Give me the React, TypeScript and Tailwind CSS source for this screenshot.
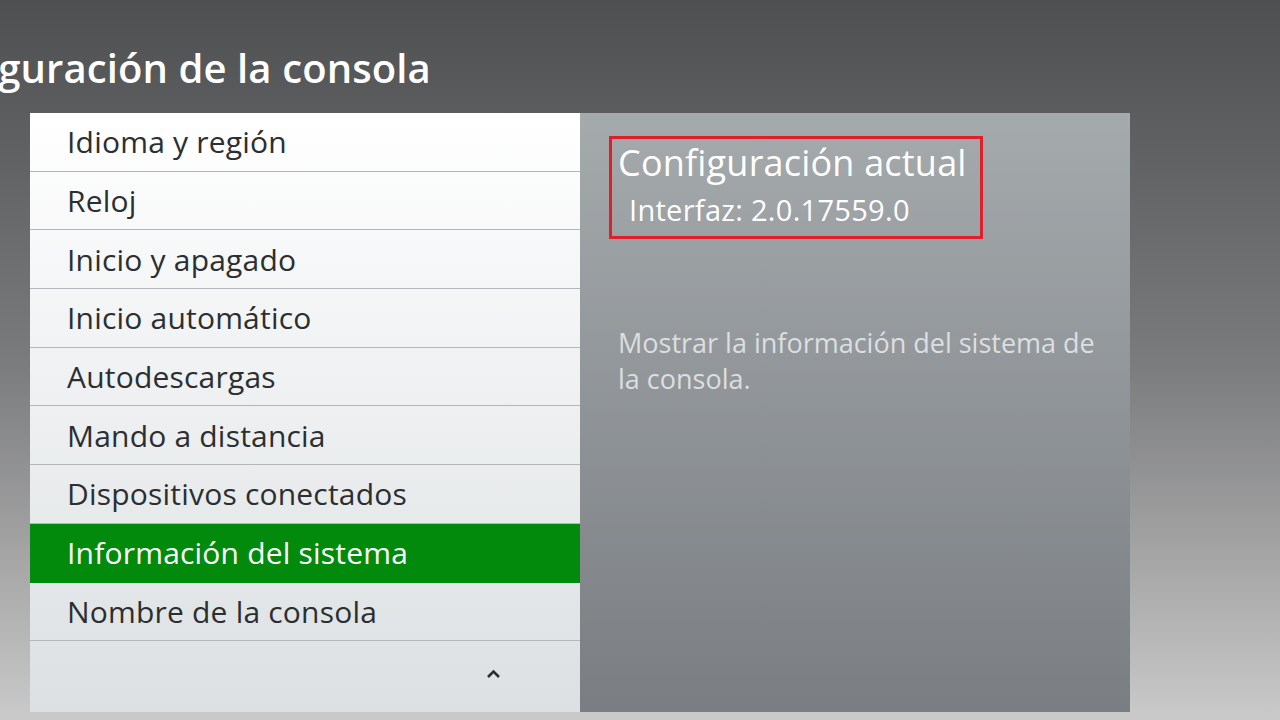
const items = [
  'Idioma y región',
  'Reloj',
  'Inicio y apagado',
  'Inicio automático',
  'Autodescargas',
  'Mando a distancia',
  'Dispositivos conectados',
  'Información del sistema',
  'Nombre de la consola',
];

const SELECTED = 7;

export default function App() {
  return (
    <div
      className="w-[1280px] h-[720px] overflow-hidden bg-gradient-to-b from-[#4e4f51] via-[#7a7b7c] to-[#cacaca] flex flex-col"
      style={{ fontFamily: '"Open Sans", "Noto Sans", sans-serif' }}
    >
      {/* page title, scrolled off the left edge */}
      <div className="h-[113px] flex items-end pb-[25px] overflow-hidden">
        <h1 className="text-white text-[40px] leading-none font-semibold whitespace-nowrap -ml-[103px] tracking-[0.1px]">
          Configuración de la consola
        </h1>
      </div>

      <div className="flex ml-[30px] w-[1100px] h-[599px]">
        {/* menu list */}
        <div className="w-[550px] flex flex-col bg-gradient-to-b from-[#ffffff] to-[#dce0e2]">
          {items.map((item, i) => (
            <div
              key={item}
              className={`h-[58.7px] shrink-0 flex items-center pl-[37px] text-[30px] tracking-[0.2px] border-b ${
                i === SELECTED
                  ? 'bg-[#018a0c] text-white border-[#018a0c]'
                  : 'text-[#2b2f31] border-[#b3b7b9]'
              }`}
            >
              {item}
            </div>
          ))}
          <div className="flex-1 flex items-center justify-end pr-[79px]">
            <svg width="15" height="11" viewBox="0 0 15 11" className="-mt-[6px]">
              <path d="M2 9 L7.5 3.5 L13 9" fill="none" stroke="#2b2f31" strokeWidth="2.6" />
            </svg>
          </div>
        </div>

        {/* detail panel */}
        <div className="w-[550px] bg-gradient-to-b from-[#a5aaad] to-[#7a7e82] pt-[23px] pl-[29px]">
          <div className="w-[374px] h-[103px] border-[3px] border-[#e01f2b] pl-[6px] pt-[4px]">
            <div className="text-white text-[36px] leading-[40px] whitespace-nowrap tracking-[0.2px]">
              Configuración actual
            </div>
            <div className="text-white text-[29px] leading-[34px] pl-[11px] mt-[10px] whitespace-nowrap tracking-[0.3px]">
              Interfaz: 2.0.17559.0
            </div>
          </div>
          <p className="mt-[86px] text-[#dcdfe0] text-[27px] leading-[36px] w-[490px] pl-[9px]">
            Mostrar la información del sistema de la consola.
          </p>
        </div>
      </div>
    </div>
  );
}
